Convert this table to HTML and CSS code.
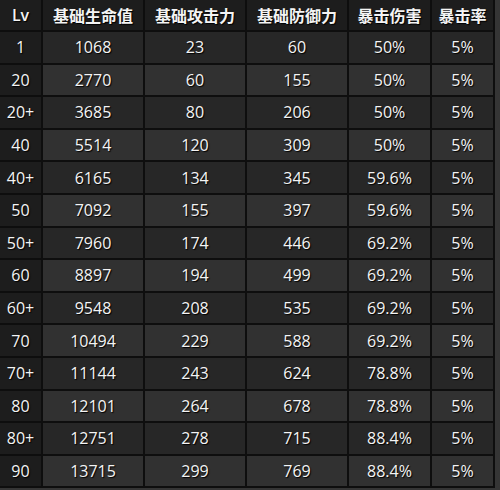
FILE: index.html
```html
<!DOCTYPE html>
<html lang="zh">
<head>
<meta charset="utf-8">
<link rel="stylesheet" href="styles.css">
</head>
<body>
<div class="wrap">
  <div class="grid">
    <div class="h lv">Lv</div><div class="h">基础生命值</div><div class="h">基础攻击力</div><div class="h">基础防御力</div><div class="h">暴击伤害</div><div class="h">暴击率</div>

    <div class="c lv">1</div><div class="c o">1068</div><div class="c o">23</div><div class="c o">60</div><div class="c o">50%</div><div class="c o">5%</div>
    <div class="c lv">20</div><div class="c e">2770</div><div class="c e">60</div><div class="c e">155</div><div class="c e">50%</div><div class="c e">5%</div>
    <div class="c lv">20+</div><div class="c o">3685</div><div class="c o">80</div><div class="c o">206</div><div class="c o">50%</div><div class="c o">5%</div>
    <div class="c lv">40</div><div class="c e">5514</div><div class="c e">120</div><div class="c e">309</div><div class="c e">50%</div><div class="c e">5%</div>
    <div class="c lv">40+</div><div class="c o">6165</div><div class="c o">134</div><div class="c o">345</div><div class="c o">59.6%</div><div class="c o">5%</div>
    <div class="c lv">50</div><div class="c e">7092</div><div class="c e">155</div><div class="c e">397</div><div class="c e">59.6%</div><div class="c e">5%</div>
    <div class="c lv">50+</div><div class="c o">7960</div><div class="c o">174</div><div class="c o">446</div><div class="c o">69.2%</div><div class="c o">5%</div>
    <div class="c lv">60</div><div class="c e">8897</div><div class="c e">194</div><div class="c e">499</div><div class="c e">69.2%</div><div class="c e">5%</div>
    <div class="c lv">60+</div><div class="c o">9548</div><div class="c o">208</div><div class="c o">535</div><div class="c o">69.2%</div><div class="c o">5%</div>
    <div class="c lv">70</div><div class="c e">10494</div><div class="c e">229</div><div class="c e">588</div><div class="c e">69.2%</div><div class="c e">5%</div>
    <div class="c lv">70+</div><div class="c o">11144</div><div class="c o">243</div><div class="c o">624</div><div class="c o">78.8%</div><div class="c o">5%</div>
    <div class="c lv">80</div><div class="c e">12101</div><div class="c e">264</div><div class="c e">678</div><div class="c e">78.8%</div><div class="c e">5%</div>
    <div class="c lv">80+</div><div class="c o">12751</div><div class="c o">278</div><div class="c o">715</div><div class="c o">88.4%</div><div class="c o">5%</div>
    <div class="c lv">90</div><div class="c e">13715</div><div class="c e">299</div><div class="c e">769</div><div class="c e">88.4%</div><div class="c e">5%</div>
  </div>
</div>
</body>
</html>
```
FILE: styles.css
```css
html, body {
  margin: 0;
  padding: 0;
  background: #353535;
  width: 500px;
  height: 490px;
  overflow: hidden;
}
.wrap {
  width: 495px;
  background: #0e0e0e;
  padding: 0 2px 2px 0;
  box-sizing: border-box;
}
.grid {
  display: grid;
  grid-template-columns: 41px 100px 100px 100px 81px 61px;
  grid-template-rows: 30px;
  grid-auto-rows: 30.6px;
  gap: 2px;
  background: #0e0e0e;
  font-family: "Open Sans", "Noto Sans CJK SC", sans-serif;
  color: #f4f4f4;
  text-shadow: 1px 1px 1px #000;
}
.h, .c {
  display: flex;
  align-items: center;
  justify-content: center;
}
.h {
  background: #1d1d1d;
  font-size: 16px;
  font-weight: 700;
  font-family: "Noto Sans CJK SC", "Open Sans", sans-serif;
}
.h.lv {
  font-family: "Open Sans", sans-serif;
  font-weight: 600;
  font-size: 16px;
}
.c {
  font-size: 16px;
  font-weight: 500;
}
.c.lv { background: #1d1d1d; }
.o { background: #272727; }
.e { background: #313131; }
```
